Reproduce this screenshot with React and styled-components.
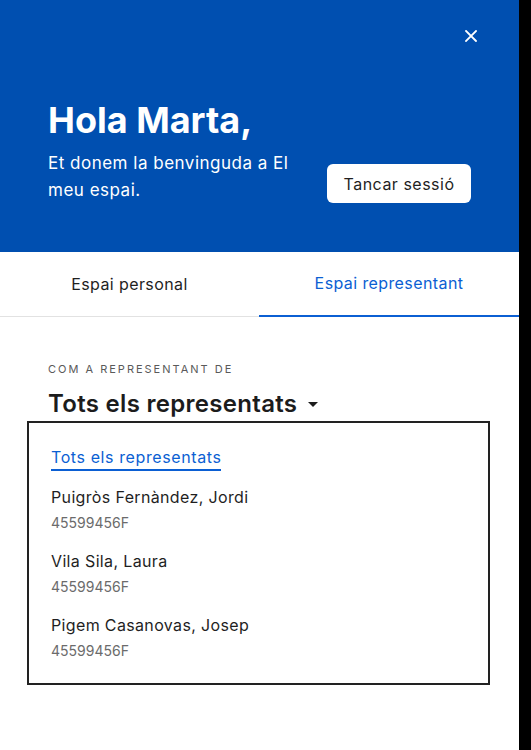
import React from 'react';
import styled, { createGlobalStyle } from 'styled-components';

const GlobalStyle = createGlobalStyle`
  html, body {
    margin: 0;
    padding: 0;
    background: #000;
  }
  body {
    font-family: Inter, 'Noto Sans', sans-serif;
    -webkit-font-smoothing: antialiased;
  }
  * { box-sizing: border-box; }
`;

const Panel = styled.div`
  width: 519px;
  min-height: 100vh;
  background: #fff;
  display: flex;
  flex-direction: column;
`;

const Header = styled.header`
  background: #004fb0;
  color: #fff;
  height: 252px;
  padding: 24px 48px 48px 48px;
  display: flex;
  flex-direction: column;
`;

const CloseButton = styled.button`
  align-self: flex-end;
  margin-right: -12px;
  width: 24px;
  height: 24px;
  padding: 0;
  border: 0;
  background: transparent;
  display: flex;
  align-items: center;
  justify-content: center;
  cursor: pointer;
`;

const Greeting = styled.h1`
  margin: 50px 0 0 0;
  font-size: 36px;
  line-height: 44px;
  font-weight: 700;
  letter-spacing: 0;
`;

const WelcomeRow = styled.div`
  margin-top: 8px;
  display: flex;
  align-items: flex-end;
  justify-content: space-between;
`;

const Welcome = styled.p`
  margin: 0;
  max-width: 262px;
  font-size: 17px;
  line-height: 27px;
  letter-spacing: 0.5px;
`;

const LogoutButton = styled.button`
  font-family: inherit;
  background: #fff;
  color: #1f1f1f;
  border: 0;
  border-radius: 6px;
  width: 144px;
  height: 39px;
  margin-bottom: 1px;
  font-size: 16px;
  letter-spacing: 0.5px;
  cursor: pointer;
`;

const TabBar = styled.nav`
  display: grid;
  grid-template-columns: 259px 1fr;
`;

const Tab = styled.button`
  font-family: inherit;
  height: 65px;
  padding: 0 0 1px 0;
  background: #fff;
  border: 0;
  border-bottom: ${p => (p.$active ? '2px solid #0b5fd3' : '1px solid #e2e2e2')};
  color: ${p => (p.$active ? '#0b5fd3' : '#1f1f1f')};
  font-size: 16px;
  letter-spacing: 0.4px;
  cursor: pointer;
`;

const Content = styled.section`
  padding: 44px 29px 0 27px;
  display: flex;
  flex-direction: column;
`;

const Eyebrow = styled.div`
  margin-left: 21px;
  font-size: 11px;
  line-height: 16px;
  letter-spacing: 2px;
  text-transform: uppercase;
  color: #5a5a5a;
`;

const Selector = styled.button`
  font-family: inherit;
  margin: 11px 0 1px 21px;
  padding: 0;
  border: 0;
  background: transparent;
  align-self: flex-start;
  display: flex;
  align-items: center;
  gap: 11px;
  font-size: 24px;
  line-height: 32px;
  font-weight: 600;
  letter-spacing: 0.3px;
  color: #1c1c1c;
  cursor: pointer;
`;

const Dropdown = styled.ul`
  list-style: none;
  margin: 0;
  padding: 22px;
  border: 2px solid #222;
  display: flex;
  flex-direction: column;
  gap: 16px;
`;

const AllLink = styled.li`
  align-self: flex-start;
  font-size: 16px;
  line-height: 24px;
  letter-spacing: 0.6px;
  color: #0b5fd3;
  border-bottom: 2px solid #0b5fd3;
  margin-bottom: -2px;
`;

const Person = styled.li`
  display: flex;
  flex-direction: column;
  gap: 4px;
`;

const PersonName = styled.span`
  font-size: 16px;
  line-height: 24px;
  letter-spacing: 0.35px;
  color: #1f1f1f;
`;

const PersonId = styled.span`
  font-size: 14px;
  line-height: 20px;
  letter-spacing: 0;
  color: #6b6b6b;
`;

const people = [
  { name: 'Puigròs Fernàndez, Jordi', id: '45599456F' },
  { name: 'Vila Sila, Laura', id: '45599456F' },
  { name: 'Pigem Casanovas, Josep', id: '45599456F' },
];

const App = () => {
  return (
    <Panel>
      <GlobalStyle />
      <Header>
        <CloseButton aria-label="Tancar">
          <svg width="12" height="12" viewBox="0 0 12 12">
            <path d="M1 1L11 11M11 1L1 11" stroke="#fff" strokeWidth="1.8" strokeLinecap="square" />
          </svg>
        </CloseButton>
        <Greeting>Hola Marta,</Greeting>
        <WelcomeRow>
          <Welcome>Et donem la benvinguda a El meu espai.</Welcome>
          <LogoutButton>Tancar sessió</LogoutButton>
        </WelcomeRow>
      </Header>
      <TabBar>
        <Tab>Espai personal</Tab>
        <Tab $active>Espai representant</Tab>
      </TabBar>
      <Content>
        <Eyebrow>Com a representant de</Eyebrow>
        <Selector>
          Tots els representats
          <svg width="10" height="5" viewBox="0 0 10 5">
            <path d="M0 0H10L5 5Z" fill="#1c1c1c" />
          </svg>
        </Selector>
        <Dropdown>
          <AllLink>Tots els representats</AllLink>
          {people.map((p, i) => (
            <Person key={i}>
              <PersonName>{p.name}</PersonName>
              <PersonId>{p.id}</PersonId>
            </Person>
          ))}
        </Dropdown>
      </Content>
    </Panel>
  );
};

export default App;
